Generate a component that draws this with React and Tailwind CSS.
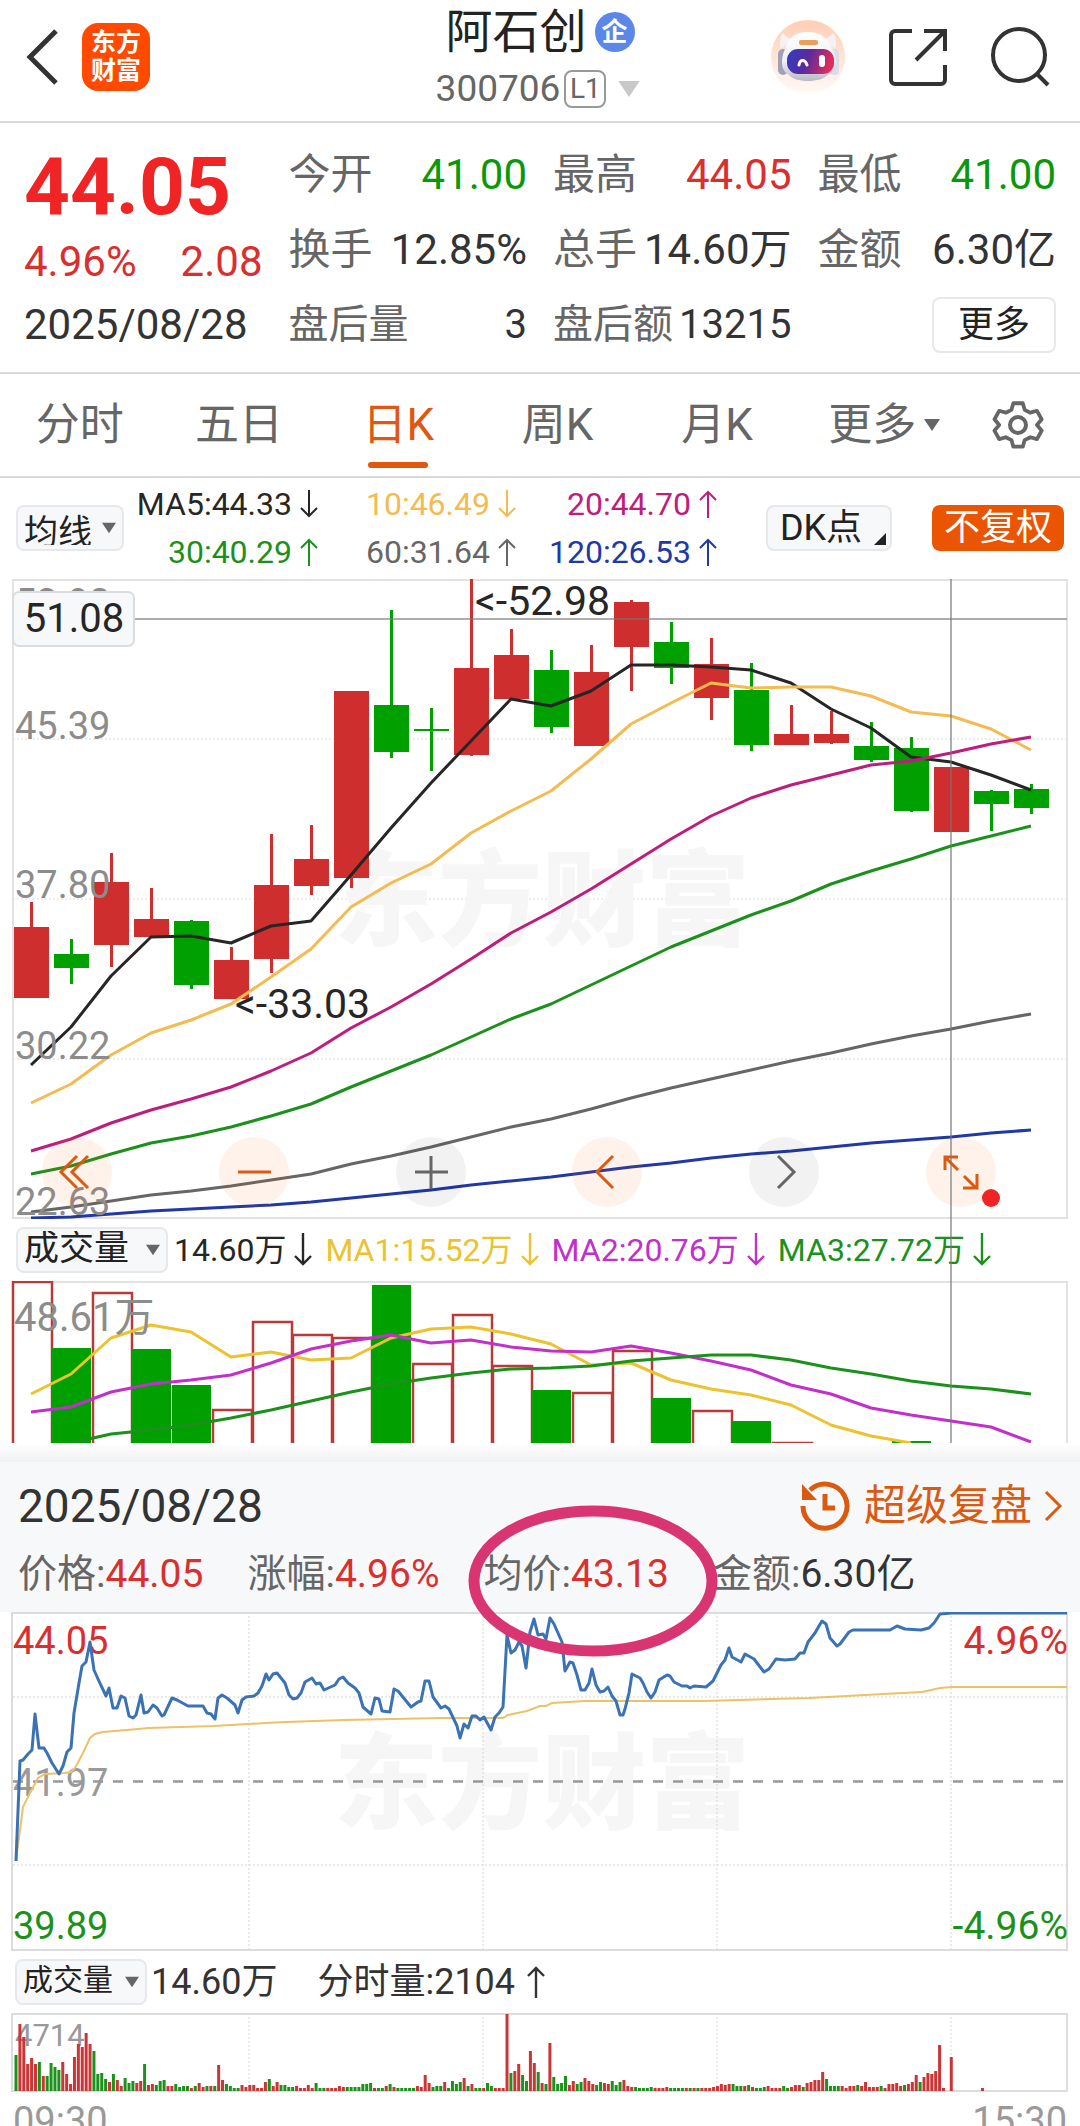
import React, { useState } from 'react';

const UP = '#cf2e2e';
const DOWN = '#00a000';

// [direction, high, open/close top, open/close bottom, low]
const CANDLES = [
    [1, 323, 348, 419, 419], [-1, 360, 375, 389, 405], [1, 274, 303, 366, 388], [1, 309, 340, 358, 358],
    [-1, 341, 342, 406, 410], [1, 368, 381, 420, 420], [1, 255, 306, 380, 394], [1, 246, 280, 307, 316],
    [1, 112, 112, 299, 309], [-1, 31, 126, 173, 179], [-1, 129, 150, 152, 192], [1, 0, 89, 176, 177],
    [1, 50, 76, 120, 120], [-1, 71, 91, 148, 154], [1, 66, 93, 167, 167], [1, 21, 23, 68, 112],
    [-1, 43, 63, 89, 105], [1, 59, 85, 119, 141], [-1, 84, 111, 166, 172], [1, 126, 155, 166, 166],
    [1, 132, 155, 164, 165], [-1, 143, 167, 181, 183], [-1, 158, 169, 232, 233], [1, 188, 188, 253, 253],
    [-1, 211, 212, 225, 252], [-1, 205, 210, 229, 235],
];

const PRICE_MAS = [
    ['#262626', [486, 448, 397, 358, 357, 364, 347, 342, 296, 249, 204, 162, 120, 127, 112, 86, 86, 88, 91, 104, 130, 149, 178, 183, 196, 211]],
    ['#f3bb51', [524, 505, 476, 454, 441, 425, 398, 370, 328, 304, 285, 254, 232, 212, 180, 145, 124, 104, 109, 108, 108, 117, 133, 137, 150, 171]],
    ['#bf1d7c', [572, 560, 544, 531, 520, 508, 492, 474, 449, 428, 405, 380, 354, 333, 310, 285, 260, 237, 219, 206, 196, 186, 182, 174, 165, 158]],
    ['#1b911b', [595, 587, 575, 564, 557, 548, 537, 525, 508, 492, 476, 458, 440, 425, 406, 387, 368, 352, 336, 322, 305, 292, 280, 267, 257, 247]],
    ['#666666', [633, 628, 622, 616, 612, 607, 601, 595, 585, 577, 568, 558, 548, 540, 530, 519, 509, 500, 491, 482, 474, 465, 457, 450, 442, 435]],
    ['#2138a5', [639, 638, 635, 632, 630, 628, 626, 623, 619, 615, 611, 606, 602, 598, 593, 588, 584, 579, 575, 572, 568, 564, 561, 558, 554, 551]],
];

// [direction, top of the bar]
const VOLUMES = [
    [1, 1], [-1, 67], [1, 12], [-1, 68], [-1, 104], [1, 129], [1, 41], [1, 54], [1, 57], [-1, 4],
    [1, 83], [1, 34], [1, 85], [-1, 109], [1, 112], [1, 70], [-1, 117], [1, 130], [-1, 140], [1, 162],
    [1, 170], [1, 170], [-1, 160],
];

const VOLUME_MAS = [
    ['#ebc32e', 0, [113, 93, 57, 44, 51, 76, 71, 79, 77, 57, 48, 46, 53, 63, 84, 82, 99, 108, 114, 124, 144, 155, 162]],
    ['#c22fca', 0, [131, 126, 111, 103, 99, 94, 82, 68, 60, 54, 62, 59, 66, 70, 71, 65, 72, 80, 89, 104, 113, 127, 134, 140, 146, 161]],
    ['#1b911b', 1, [162, 153, 149, 144, 137, 129, 120, 111, 103, 97, 92, 88, 87, 85, 80, 77, 74, 74, 79, 87, 93, 100, 105, 108, 113]],
];

const INTRADAY_PRICE =
    '16,249 20,149 23,148 28,142 32,138 35,102 39,136 44,136 47,141 52,151 59,162 63,154 67,140 71,136 74,101 79,71 82,54 86,50 90,30 94,58 98,67 106,84 109,76 113,96 117,96 121,84 125,86 129,104 133,106 136,103 141,83 144,101 148,100 153,93 157,96 162,104 164,103 172,86 177,88 188,94 203,94 207,101 211,102 215,107 218,86 222,83 227,86 235,93 238,101 242,88 246,85 254,84 258,81 262,74 266,62 269,68 273,62 277,61 285,71 289,83 293,87 297,86 301,81 305,70 312,66 316,72 320,71 324,78 335,73 339,67 343,65 348,71 355,76 359,81 363,95 371,102 375,86 379,87 382,99 390,100 394,77 398,79 411,95 418,90 421,89 425,69 429,69 433,85 441,96 445,94 449,97 457,114 460,126 464,112 468,116 472,104 476,104 480,108 484,105 491,118 495,105 499,101 503,95 507,23 511,41 515,38 519,30 522,34 526,56 530,20 534,7 538,23 543,22 546,27 550,6 554,12 562,30 565,59 570,50 573,51 577,63 581,78 585,78 589,71 592,57 596,73 600,80 604,79 608,75 612,84 616,89 620,103 623,103 625,97 629,81 632,62 640,66 643,71 647,80 651,86 655,80 659,68 667,63 670,64 674,70 682,74 687,74 690,76 694,74 706,75 713,69 721,53 725,48 729,36 732,45 741,50 745,42 754,47 764,60 769,57 776,47 785,48 795,47 800,41 804,41 808,30 815,21 819,14 822,9 826,12 830,26 837,34 840,32 849,20 853,18 876,18 890,18 897,14 905,17 921,18 929,16 934,11 940,2 952,1 1067,1';

const INTRADAY_AVG =
    '16,248 20,218 23,195 29,183 38,166 45,162 65,161 71,160 75,156 83,141 90,126 95,122 103,120 138,117 148,116 214,114 265,111 286,110 344,108 441,106 503,106 508,103 527,99 540,94 546,94 552,91 585,89 705,89 809,86 884,82 922,80 940,76 952,75 1067,75';

// One bar per minute, negative = falling minute
const MINUTE_VOLUMES = [
    -36, 67, 54, 27, 33, 27, -29, 15, -15, -28, -24, -21, 29, 17, 7, 34, 47, 44, 58, 47, -40, -17, -18, -12, 9, -17, 11, 5, -13, -8,
    -10, 8, 10, -27, 6, 7, -6, -10, -11, 5, 5, -7, -4, -5, -5, 3, -5, 8, 4, -5, 5, -5, 26, 11, -7, -5, -3, -3, 6, 4,
    6, 6, 3, 3, 9, -12, 5, 9, -6, -6, -4, -4, 5, 3, 3, 6, 3, -8, -3, -3, 3, 3, 3, 5, 4, -4, -4, -4, -4, -7,
    -7, -8, 3, -3, -3, 5, -7, 4, -3, -3, -3, -3, -3, 5, 4, 16, 8, -4, -5, -5, 9, -3, -10, -7, -9, 13, -5, 7, -3, -3,
    3, -8, -5, 3, 3, 3, 77, -18, 20, 27, -16, -10, 40, 28, -19, 8, -7, 48, -14, -7, -8, -15, 6, 10, -7, -9, 13, 10, 7, -6,
    -9, 8, 7, -10, -6, -9, 11, 5, 4, -4, -3, -3, -3, -4, 3, 3, 3, 4, -3, -3, -3, -3, 3, -3, 3, -3, 3, 3, 3, 4,
    5, 7, 6, 7, -7, -5, -5, 5, -6, 4, -3, -3, -4, 5, 3, 3, 3, -5, -3, 4, 6, 6, -4, 8, 9, 11, 11, 19, -12, -5,
    -5, -5, 5, 3, 5, 5, -6, 5, 9, 4, 4, 4, -5, 3, 7, 7, 8, 5, -6, 7, 9, 16, -9, 14, 18, 17, 20, 46, 3, 0,
    34, 0, 0, 0, 0, 0, 0, 0, 3,
];

const centerX = (i) => 31 + i * 40;
const toPoints = (values, start = 0) => values.map((y, i) => `${centerX(i + start)},${y}`).join(' ');

const Arrow = ({ up }) => (
    <svg viewBox="0 0 18 28" className="w-[18px] h-7 shrink-0" fill="none" stroke="currentColor" strokeWidth="2">
        {up ? <path d="M9 28V2M1 10L9 2l8 8" /> : <path d="M9 0v26M1 18l8 8 8-8" />}
    </svg>
);

const TallArrow = ({ up }) => (
    <svg viewBox="0 0 18 34" className="w-[18px] h-[34px] shrink-0" fill="none" stroke="currentColor" strokeWidth="2.4">
        {up ? <path d="M9 33V3M1 11L9 3l8 8" /> : <path d="M9 0v31M1 23l8 8 8-8" />}
    </svg>
);

const Caret = ({ className }) => (
    <svg viewBox="0 0 16 12" className={className} fill="currentColor">
        <path d="M0 0h16L8 12z" />
    </svg>
);

const Watermark = ({ y }) => (
    <text x="542" y={y} textAnchor="middle" fontSize="104" fontWeight="900" fill="#f6f6f6">东方财富</text>
);

const PickList = ({ label, options, className, size }) => (
    <label className={`relative block h-[46px] shrink-0 ${className}`}>
        <select
            aria-label={label}
            className={`appearance-none w-full h-full pl-[6px] pb-1 rounded-lg border-2 border-[#e6e8eb] bg-[#f7f8fa] text-[#222] ${size}`}
        >
            {options.map((o) => <option key={o}>{o}</option>)}
        </select>
        <Caret className="absolute right-2 top-[17px] w-[14px] h-3 text-[#666] pointer-events-none" />
    </label>
);

const RobotIcon = () => (
    <svg viewBox="0 0 76 76" className="w-[76px] h-[76px]">
        <defs>
            <linearGradient id="halo" x1="0" y1="0" x2="0" y2="1">
                <stop offset="0" stopColor="#ffceb4" />
                <stop offset="1" stopColor="#fffaf7" />
            </linearGradient>
            <linearGradient id="visor" x1="0" y1="0" x2="1" y2="0.2">
                <stop offset="0" stopColor="#2f3fc0" />
                <stop offset="0.5" stopColor="#5a2a9c" />
                <stop offset="1" stopColor="#e02c5c" />
            </linearGradient>
            <linearGradient id="shell" x1="0" y1="0" x2="0" y2="1">
                <stop offset="0" stopColor="#ffffff" />
                <stop offset="0.6" stopColor="#f0eef2" />
                <stop offset="1" stopColor="#b9b9c8" />
            </linearGradient>
        </defs>
        <circle cx="38" cy="38" r="37" fill="url(#halo)" />
        <path d="M11 30c-2-7-1-12 2-16 2 4 6 5 9 6zM65 30c2-7 1-12-2-16-2 4-6 5-9 6z" fill="#f4f2f6" />
        <rect x="8" y="30" width="10" height="26" rx="5" fill="#9fa2b6" />
        <rect x="60" y="30" width="9" height="26" rx="4" fill="#dcdce6" />
        <path d="M38 13c13 0 21 7 24 17 3 4 4 9 4 13 0 6-3 10-7 12-5 5-12 7-21 7s-16-2-20-7c-4-2-6-6-6-12 0-4 1-9 3-13 2-10 10-17 23-17z" fill="url(#shell)" />
        <rect x="29" y="21" width="19" height="5" rx="2" fill="#e9a05c" />
        <rect x="17" y="30" width="47" height="25" rx="11" fill="url(#visor)" />
        <path d="M29 46c1-6 6-6 8 0" fill="none" stroke="#fff" strokeWidth="3" strokeLinecap="round" />
        <rect x="49" y="36" width="6" height="12" rx="3" fill="#fff" />
    </svg>
);

const Header = () => (
    <header className="grid grid-cols-[1fr_auto_1fr] items-center h-[123px] pl-[26px] pr-[30px] pb-2 border-b-2 border-[#d9d9d9]">
        <div className="flex items-center gap-6">
            <button aria-label="返回" className="w-8 h-14 text-[#333]">
                <svg viewBox="0 0 32 56" fill="none" stroke="currentColor" strokeWidth="5">
                    <path d="M30 2L4 28l26 26" />
                </svg>
            </button>
            <a href="#home" className="flex flex-col items-center justify-center w-[68px] h-[68px] rounded-2xl bg-[#ff4a00] text-white text-[25px] font-bold leading-[28px]">
                <span>东方</span>
                <span>财富</span>
            </a>
        </div>

        <div className="flex flex-col items-center gap-3">
            <div className="flex items-center gap-2 h-[52px] pl-1">
                <h1 className="text-[47px] leading-[52px] text-[#222]">阿石创</h1>
                <span className="flex items-center justify-center w-10 h-10 rounded-full bg-[#5b87e8] text-white text-[26px] leading-none font-bold">企</span>
            </div>
            <button className="flex items-center h-[38px] text-[37px] leading-none text-[#666]">
                300706
                <span className="flex items-center justify-center w-[42px] h-[38px] ml-1 rounded-lg border-2 border-[#999] text-[28px]">L1</span>
                <Caret className="w-[22px] h-4 ml-3 text-[#c8c8c8]" />
            </button>
        </div>

        <div className="flex items-center justify-end gap-[42px]">
            <button aria-label="智能助手"><RobotIcon /></button>
            <button aria-label="分享" className="w-[60px] h-[60px] text-[#333]">
                <svg viewBox="0 0 60 60" fill="none" stroke="currentColor" strokeWidth="4">
                    <path d="M24 4H7a4 4 0 0 0-4 4v45a4 4 0 0 0 4 4h46a4 4 0 0 0 4-4V38M36 4h21v20M57 4L28 33" />
                </svg>
            </button>
            <button aria-label="搜索" className="w-[60px] h-[60px] text-[#333]">
                <svg viewBox="0 0 60 60" fill="none" stroke="currentColor" strokeWidth="4">
                    <circle cx="29" cy="28" r="26" />
                    <path d="M47 47l11 11" />
                </svg>
            </button>
        </div>
    </header>
);

const Stat = ({ label, value, color = 'text-[#333]', small }) => (
    <div className={`flex items-center justify-between h-[75px] leading-none whitespace-nowrap ${small ? 'text-[40px]' : 'text-[42px]'}`}>
        <dt className="text-[#666]">{label}</dt>
        <dd className={color}>{value}</dd>
    </div>
);

const Quote = () => (
    <section className="grid grid-cols-4 gap-x-[26px] px-6 pt-[14px] pb-[10px] border-b-2 border-[#d9d9d9]">
        <div className="leading-none text-[#d92f2f]">
            <div className="flex items-center h-[100px] text-[80px] font-bold text-[#f02424]">44.05</div>
            <div className="flex items-center justify-between h-[50px] text-[42px]">
                <span>4.96%</span>
                <span>2.08</span>
            </div>
            <div className="flex items-center h-[75px] text-[42px] text-[#333]">2025/08/28</div>
        </div>
        <dl>
            <Stat label="今开" value="41.00" color="text-[#0a980a]" />
            <Stat label="换手" value="12.85%" />
            <Stat label="盘后量" value="3" small />
        </dl>
        <dl>
            <Stat label="最高" value="44.05" color="text-[#d92f2f]" />
            <Stat label="总手" value="14.60万" />
            <Stat label="盘后额" value="13215" small />
        </dl>
        <div>
            <dl>
                <Stat label="最低" value="41.00" color="text-[#0a980a]" />
                <Stat label="金额" value="6.30亿" />
            </dl>
            <div className="flex items-center justify-end h-[75px]">
                <button className="w-[124px] h-14 rounded-lg border-2 border-[#e8e8e8] text-[36px] leading-none text-[#222]">更多</button>
            </div>
        </div>
    </section>
);

const TABS = ['分时', '五日', '日K', '周K', '月K', '更多'];

const Tabs = () => {
    const [active, setActive] = useState('日K');

    return (
        <nav className="flex h-[104px] border-b-2 border-[#d9d9d9]">
            {TABS.map((tab) => (
                <button
                    key={tab}
                    onClick={() => setActive(tab)}
                    className={`relative flex flex-1 items-center justify-center gap-2 text-[44px] leading-none whitespace-nowrap ${active === tab ? 'text-[#e0570f]' : 'text-[#666]'}`}
                >
                    <span className={tab === '更多' ? 'ml-4' : ''}>{tab}</span>
                    {tab === '更多' && <Caret className="w-4 h-3" />}
                    {active === tab && <span className="absolute bottom-2 w-[60px] h-[6px] rounded-full bg-[#e0570f]"></span>}
                </button>
            ))}
            <button aria-label="设置" className="flex items-center justify-center w-[124px] text-[#666]">
                <svg viewBox="0 0 52 52" className="w-[52px] h-[52px]" fill="none" stroke="currentColor" strokeWidth="4" strokeLinejoin="round">
                    <path d="M21 3h10l2 7 6 3 7-2 5 9-5 6 5 6-5 9-7-2-6 3-2 7H21l-2-7-6-3-7 2-5-9 5-6-5-6 5-9 7 2 6-3z" transform="translate(1.5 1.4) scale(.945)" />
                    <circle cx="26" cy="26" r="8" />
                </svg>
            </button>
        </nav>
    );
};

const AverageLabel = ({ text, up, color }) => (
    <span className={`flex items-center justify-end gap-2 h-12 ${color}`}>
        {text}
        <Arrow up={up} />
    </span>
);

const AverageBar = () => (
    <div className="flex items-center h-[101px] px-4 pb-[2px]">
        <PickList label="主图指标" options={['均线', 'BOLL']} className="w-[108px]" size="text-[34px]" />
        <div className="grid grid-cols-[194px_198px_201px] text-[32px] leading-none whitespace-nowrap">
            <AverageLabel text="MA5:44.33" color="text-[#262626]" />
            <AverageLabel text="10:46.49" color="text-[#f3bb51]" />
            <AverageLabel text="20:44.70" up color="text-[#bf1d7c]" />
            <AverageLabel text="30:40.29" up color="text-[#1b911b]" />
            <AverageLabel text="60:31.64" up color="text-[#666]" />
            <AverageLabel text="120:26.53" up color="text-[#2138a5]" />
        </div>
        <button className="relative w-[126px] h-[46px] ml-auto pr-4 rounded-lg border-2 border-[#e6e8eb] bg-[#f7f8fa] text-[36px] leading-none text-[#222] whitespace-nowrap">
            DK点
            <svg viewBox="0 0 12 12" className="absolute right-1 bottom-1 w-3 h-3" fill="currentColor">
                <path d="M12 0v12H0z" />
            </svg>
        </button>
        <button className="w-[132px] h-[46px] ml-10 rounded-lg bg-[#ea5504] text-[36px] leading-none text-white whitespace-nowrap">不复权</button>
    </div>
);

const CandleChart = () => (
    <svg viewBox="0 0 1080 640" className="block w-full h-auto">
        <g stroke="#dcdcdc" strokeWidth="1" strokeDasharray="2 2">
            <path d="M13 160H1067M13 320H1067M13 480H1067" />
        </g>
        <rect x="13" y="1" width="1054" height="638" fill="none" stroke="#e2e2e2" strokeWidth="2" />
        <Watermark y="359" />
        {CANDLES.map(([dir, high, top, bottom, low], i) => (
            <g key={i} fill={dir > 0 ? UP : DOWN}>
                <rect x={centerX(i) - 1} y={high} width="3" height={low - high} />
                <rect x={centerX(i) - 17} y={top} width="35" height={bottom - top} />
            </g>
        ))}
        {PRICE_MAS.map(([color, values]) => (
            <polyline key={color} points={toPoints(values)} fill="none" stroke={color} strokeWidth="3" strokeLinejoin="round" />
        ))}
        <path d="M134 40H1067" stroke="#777" strokeOpacity="0.6" strokeWidth="2" />
        <g fontSize="38" fill="#8c8c8c">
            <text x="15" y="37">52.98</text>
            <text x="15" y="160">45.39</text>
            <text x="15" y="319">37.80</text>
            <text x="15" y="480">30.22</text>
            <text x="15" y="636">22.63</text>
        </g>
        <g fontSize="41" fill="#262626">
            <text x="475" y="36">&lt;-52.98</text>
            <text x="235" y="439">&lt;-33.03</text>
            <rect x="13" y="13" width="121" height="54" rx="6" fill="#f7f8fa" stroke="#dadde0" strokeWidth="2" />
            <text x="74" y="53" fontSize="40" textAnchor="middle">51.08</text>
        </g>
    </svg>
);

const TOOLS = [
    ['快退', 'M24 8L8 24l16 16M35 8L19 24l16 16', true],
    ['缩小', 'M8 24h33', true],
    ['放大', 'M8 24h33M24 8v33', false],
    ['左移', 'M30 8L14 24l16 16', true],
    ['右移', 'M18 8l16 16-16 16', false],
    ['全屏', 'M8 22V9h13M8 9l13 13M27 28l12 12M40 26v14H26', true],
];

const ChartTools = () => (
    <div className="absolute inset-x-0 bottom-3 flex justify-between pl-[42px] pr-[84px]">
        {TOOLS.map(([label, d, warm]) => (
            <button
                key={label}
                aria-label={label}
                className={`relative flex items-center justify-center w-[70px] h-[70px] rounded-full ${warm ? 'bg-[#ff5a00]/8 text-[#dc5a10]' : 'bg-black/5 text-[#666]'}`}
            >
                <svg viewBox="0 0 48 48" className="w-12 h-12" fill="none" stroke="currentColor" strokeWidth="3">
                    <path d={d} />
                </svg>
                {label === '全屏' && <span className="absolute -right-1 bottom-0 w-[18px] h-[18px] rounded-full bg-[#f02424]"></span>}
            </button>
        ))}
    </div>
);

const VolumeBar = () => (
    <div className="flex items-center h-[62px] pl-4 text-[32px] leading-none whitespace-nowrap">
        <PickList label="副图指标" options={['成交量', 'MACD', 'KDJ']} className="w-[152px]" size="text-[35px]" />
        <div className="flex gap-[13px] ml-[6px]">
            <span className="flex items-center gap-2 text-[#262626]">14.60万<TallArrow /></span>
            <span className="flex items-center gap-2 text-[#ebc32e]">MA1:15.52万<TallArrow /></span>
            <span className="flex items-center gap-2 text-[#c22fca]">MA2:20.76万<TallArrow /></span>
            <span className="flex items-center gap-2 text-[#1b911b]">MA3:27.72万<TallArrow /></span>
        </div>
    </div>
);

const VolumeChart = () => (
    <svg viewBox="0 0 1080 162" className="block w-full h-auto">
        <path d="M13 162V1H1067V162" fill="none" stroke="#e2e2e2" strokeWidth="2" />
        {VOLUMES.map(([dir, top], i) => (
            dir > 0
                ? <rect key={i} x={13 + i * 40} y={top} width="39" height="200" fill="#fff" stroke="#b93a38" strokeWidth="2.5" />
                : <rect key={i} x={12 + i * 40} y={top} width="39" height="200" fill={DOWN} />
        ))}
        {VOLUME_MAS.map(([color, start, values]) => (
            <polyline key={color} points={toPoints(values, start)} fill="none" stroke={color} strokeWidth="3" strokeLinejoin="round" />
        ))}
        <text x="14" y="50" fontSize="40" fill="#8c8c8c">48.61万</text>
    </svg>
);

const DayItem = ({ label, value, color }) => (
    <span className="text-[#666]">
        {label}:<span className={color}>{value}</span>
    </span>
);

const DayPanel = () => (
    <section className="relative h-[150px] px-[18px] pt-4 bg-[#f7f8fa]">
        <div className="flex items-center justify-between h-14 leading-none">
            <h2 className="text-[46px] text-[#333]">2025/08/28</h2>
            <a href="#replay" className="flex items-center text-[42px] text-[#dc5a10]">
                <svg viewBox="0 0 50 50" className="w-[50px] h-[50px] mr-[14px]" fill="none" stroke="currentColor" strokeWidth="5">
                    <path d="M3 25a22 22 0 1 0 7-16" />
                    <path d="M25 13v14h10" />
                    <path d="M2 3v16h15z" fill="currentColor" stroke="none" />
                </svg>
                超级复盘
                <svg viewBox="0 0 18 30" className="w-[18px] h-[30px] ml-3" fill="none" stroke="currentColor" strokeWidth="3">
                    <path d="M2 1l14 14L2 29" />
                </svg>
            </a>
        </div>
        <div className="flex gap-11 pt-3 text-[39px] leading-[56px] whitespace-nowrap">
            <DayItem label="价格" value="44.05" color="text-[#d92f2f]" />
            <DayItem label="涨幅" value="4.96%" color="text-[#d92f2f]" />
            <DayItem label="均价" value="43.13" color="text-[#d92f2f]" />
            <DayItem label="金额" value="6.30亿" color="text-[#333]" />
        </div>
        {/* hand-drawn mark round the average price */}
        <svg viewBox="0 0 250 152" className="absolute left-[468px] top-[43px] z-10 w-[250px] h-[152px] pointer-events-none">
            <ellipse cx="125" cy="76" rx="119" ry="70" fill="none" stroke="#d93572" strokeWidth="11" />
        </svg>
    </section>
);

const IntradayChart = () => (
    <svg viewBox="0 0 1080 339" className="block w-full h-auto">
        <Watermark y="209" />
        <path d="M13 85H1067M13 253H1067M249 0V338M483 0V338M717 0V338M951 0V338" stroke="#d4d4d4" strokeWidth="1" strokeDasharray="2 2" />
        <rect x="12" y="1" width="1055" height="337" fill="none" stroke="#dcdcdc" strokeWidth="2" />
        <path d="M13 169.500H1067" stroke="#999" strokeWidth="2.5" strokeDasharray="10 10" />
        <g fontSize="38">
            <text x="13" y="42" fill="#d92f2f">44.05</text>
            <text x="13" y="184" fill="#999">41.97</text>
            <text x="13" y="327" fill="#1b911b">39.89</text>
            <text x="1068" y="42" fontSize="39" textAnchor="end" fill="#d92f2f">4.96%</text>
            <text x="1068" y="327" fontSize="39" textAnchor="end" fill="#1b911b">-4.96%</text>
        </g>
        <polyline points={INTRADAY_AVG} fill="none" stroke="#ecc168" strokeWidth="2" />
        <polyline points={INTRADAY_PRICE} fill="none" stroke="#3a72b4" strokeWidth="3" strokeLinejoin="round" />
    </svg>
);

const MinuteVolume = () => (
    <>
        <div className="flex items-center h-[62px] pl-[15px] text-[36px] leading-none text-[#333] whitespace-nowrap">
            <PickList label="分时指标" options={['成交量', '量比']} className="w-[132px]" size="text-[30px]" />
            <span className="ml-1">14.60万</span>
            <span className="flex items-center gap-3 ml-10">分时量:2104<TallArrow up /></span>
        </div>
        <svg viewBox="0 0 1080 79" className="block w-full h-auto">
            <path d="M249 0V78M483 0V78M717 0V78M951 0V78" stroke="#d4d4d4" strokeWidth="1" strokeDasharray="2 2" />
            <rect x="12" y="1" width="1055" height="77" fill="none" stroke="#dcdcdc" strokeWidth="2" />
            <text x="15" y="33" fontSize="31" fill="#999">4714</text>
            {MINUTE_VOLUMES.map((v, i) => (
                <rect key={i} x={14.500 + i * 3.897} y={78 - Math.abs(v)} width="3" height={Math.abs(v)} fill={v > 0 ? '#cc3535' : '#1c921c'} />
            ))}
        </svg>
        <div className="flex justify-between px-[13px] pt-[10px] text-[38px] leading-[38px] text-[#999]">
            <span>09:30</span>
            <span>15:30</span>
        </div>
    </>
);

const App = () => (
    <div className="h-screen overflow-hidden bg-white font-['Roboto','Noto_Sans_CJK_SC',sans-serif]">
        <Header />
        <Quote />
        <Tabs />
        <AverageBar />
        <div className="relative">
            <div className="relative">
                <CandleChart />
                <ChartTools />
            </div>
            <VolumeBar />
            <VolumeChart />
            {/* crosshair runs through both charts */}
            <div className="absolute inset-y-0 left-[88%] w-[2px] bg-[#777]/60"></div>
        </div>
        <div className="h-[19px] bg-gradient-to-b from-white to-[#f1f1f2]"></div>
        <DayPanel />
        <IntradayChart />
        <MinuteVolume />
    </div>
);

export default App;
